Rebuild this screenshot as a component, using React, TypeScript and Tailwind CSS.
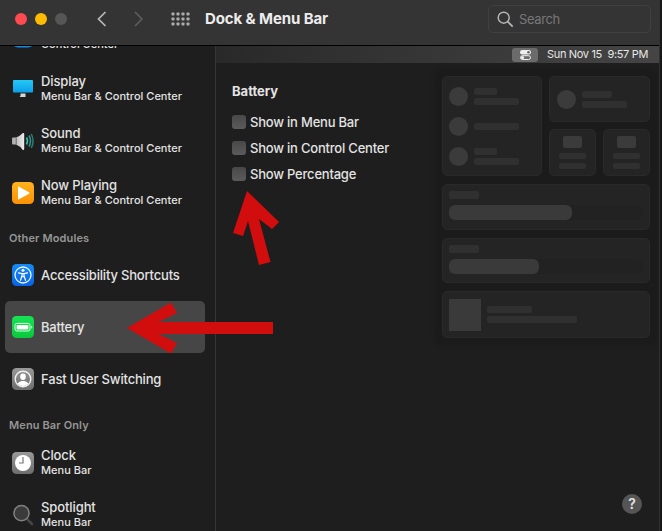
import type { ReactNode } from "react";

function Row({ icon, title, sub, active }: { icon: ReactNode; title?: ReactNode; sub?: ReactNode; active?: boolean }) {
  return (
    <div className={`ml-[5px] flex h-[52px] w-[200px] shrink-0 items-center rounded-[5px] pl-[6px] ${active ? "bg-[#464646]" : ""}`}>
      <div className="h-6 w-6 shrink-0">{icon}</div>
      <div className={`ml-[6px] whitespace-nowrap text-[#e3e3e3] ${sub ? "pb-[2px]" : ""}`}>
        <div className={`min-h-4 text-[13px] font-medium leading-4 ${sub ? "-mt-px tracking-[-0.1px]" : "tracking-[-0.18px]"}`}>{title}</div>
        {sub && <div className="text-[11px] font-medium leading-[14px] tracking-[0.02px]">{sub}</div>}
      </div>
    </div>
  );
}

function Gradients() {
  return (
    <svg width="0" height="0" className="absolute">
      <defs>
        <linearGradient id="cyan" x2="0" y2="1"><stop stopColor="#25c8f7" /><stop offset="1" stopColor="#0b9fe8" /></linearGradient>
        <linearGradient id="orange" x2="0" y2="1"><stop stopColor="#ffb31c" /><stop offset="1" stopColor="#fb9106" /></linearGradient>
        <linearGradient id="blue" x2="0" y2="1"><stop stopColor="#168bf4" /><stop offset="1" stopColor="#0863e6" /></linearGradient>
        <linearGradient id="green" x2="0" y2="1"><stop stopColor="#16e454" /><stop offset="1" stopColor="#0bc83d" /></linearGradient>
        <linearGradient id="gray" x2="0" y2="1"><stop stopColor="#999" /><stop offset="1" stopColor="#6d6d6d" /></linearGradient>
        <linearGradient id="silver" x2="1" y2="0"><stop stopColor="#a5a5a5" /><stop offset="1" stopColor="#ededed" /></linearGradient>
      </defs>
    </svg>
  );
}

function ControlIcon() {
  return (
    <svg width="24" height="24">
      <rect x="1" y="1" width="22" height="21.500" rx="6" fill="#1688e0" />
    </svg>
  );
}

function DisplayIcon() {
  return (
    <svg width="24" height="24">
      <rect x="2" y="3" width="20" height="12.500" rx="0.800" fill="url(#cyan)" />
      <path d="M9.500 16.500h5v3.500h-6l1-1z" fill="#d6d6d6" />
    </svg>
  );
}

function SoundIcon() {
  return (
    <svg width="24" height="24" fill="none">
      <path d="M1 9.500q0-1 1-1h3q4-1.300 6.500-4.200 1.700-.8 1.700 1v14.400q0 1.700-1.700 1Q9 17 5 15.500H2q-1 0-1-1z" fill="url(#silver)" />
      <path d="M5.200 8.500v7" stroke="#666" strokeWidth="1" />
      <path d="M15.500 8.500q2 3.500 0 7" stroke="#3fb8ae" strokeWidth="1.600" />
      <path d="M18 6.500q3 5.500 0 11" stroke="#2c948c" strokeWidth="1.600" />
      <path d="M20.300 5q3.500 7 0 14" stroke="#2d7d75" strokeWidth="1.500" />
    </svg>
  );
}

function PlayIcon() {
  return (
    <svg width="24" height="24">
      <rect x="1" y="1" width="22" height="22" rx="4.500" fill="url(#orange)" />
      <path d="M7 6.200v11.600q0 1 1 .5l10-5.500q1.200-.8 0-1.500L8 5.700q-1-.5-1 .5z" fill="#fff" />
    </svg>
  );
}

function AccessIcon() {
  return (
    <svg width="24" height="24" fill="none">
      <rect x="1" y="1" width="22" height="22" rx="4.500" fill="url(#blue)" />
      <circle cx="12" cy="12" r="8" stroke="#e8f2ff" strokeWidth="1.300" />
      <circle cx="12" cy="7.300" r="1.500" fill="#fff" />
      <path d="M7.500 9.800l3.500.8v2.200L9.500 17.300M16.500 9.800l-3.500.8v2.200l1.500 4.500M11 10.600h2v3h-2z" stroke="#fff" strokeWidth="1.200" strokeLinecap="round" strokeLinejoin="round" />
    </svg>
  );
}

function BatteryIcon() {
  return (
    <svg width="24" height="24" fill="none">
      <rect x="1" y="1" width="22" height="22" rx="4.500" fill="url(#green)" />
      <rect x="4" y="8.400" width="15" height="7.600" rx="2" stroke="#d9ffe3" />
      <rect x="5.600" y="10" width="11.800" height="4.400" rx="0.700" fill="#fff" />
      <path d="M20.200 10.800q1 0 1 1.400t-1 1.400z" fill="#d9ffe3" />
    </svg>
  );
}

function UserIcon() {
  return (
    <svg width="24" height="24" fill="none">
      <rect x="1" y="1" width="22" height="22" rx="4.500" fill="url(#gray)" />
      <circle cx="12" cy="12" r="7.800" stroke="#f1f1f1" strokeWidth="1.400" />
      <ellipse cx="12" cy="9.800" rx="2.800" ry="3.300" fill="#fff" />
      <path d="M6.500 16.500q1.500-2 4-2.500h3q2.500.5 4 2.500Q15 19 12 19t-5.500-2.500z" fill="#fff" />
    </svg>
  );
}

function ClockIcon() {
  return (
    <svg width="24" height="24" fill="none">
      <rect x="1" y="1" width="22" height="22" rx="4.500" fill="url(#gray)" />
      <circle cx="12" cy="12" r="8" fill="#fff" />
      <path d="M12 6v6H8" stroke="#777" strokeWidth="1.200" />
    </svg>
  );
}

function SpotlightIcon() {
  return (
    <svg width="24" height="24" fill="none">
      <path d="M16.500 16.500l4.500 4.500" stroke="#454545" strokeWidth="2.600" strokeLinecap="round" />
      <circle cx="10.500" cy="10.200" r="7.600" fill="#3b3b3b" stroke="#818181" strokeWidth="1.500" />
    </svg>
  );
}

function Check({ children }: { children: ReactNode }) {
  return (
    <div className="flex h-[26px] items-center whitespace-nowrap text-[13px] font-medium tracking-[-0.21px] text-[#e3e3e3]">
      <span className="mr-1 h-[14px] w-[14px] rounded-[3px] bg-linear-to-b from-[#484848] to-[#5b5b5b]" />
      <span className="pt-px">{children}</span>
    </div>
  );
}

const card = "rounded-[5px] border border-[#292929] bg-[#242424]";

function Lines({ a, b }: { a: string; b?: string }) {
  return (
    <div className="ml-[6px] flex flex-col gap-[3px]">
      <div className={`h-[7px] rounded-[2px] bg-[#303030] ${a}`} />
      {b && <div className={`h-[7px] rounded-[2px] bg-[#303030] ${b}`} />}
    </div>
  );
}

function Toggle({ a, b }: { a: string; b?: string }) {
  return (
    <div className="flex h-[30px] items-center">
      <div className="h-[19px] w-[19px] rounded-full bg-[#3b3b3b]" />
      <Lines a={a} b={b} />
    </div>
  );
}

function SmallCard() {
  return (
    <div className={`${card} flex h-[47px] flex-1 flex-col items-center pt-[6px]`}>
      <div className="h-[12px] w-[19px] rounded-[2px] bg-[#3b3b3b]" />
      <div className="mt-[5px] h-[6px] w-[27px] rounded-[2px] bg-[#303030]" />
      <div className="mt-[4px] h-[6px] w-[27px] rounded-[2px] bg-[#303030]" />
    </div>
  );
}

function SliderCard({ width, height }: { width: string; height: string }) {
  return (
    <div className={`${card} px-[6px] pt-[6px] ${height}`}>
      <div className="h-[8px] w-[30px] rounded-[2px] bg-[#303030]" />
      <div className="mt-[6px] h-[15px] rounded-full bg-[#222]">
        <div className={`h-full rounded-[6px] bg-[#3a3a3a] ${width}`} />
      </div>
    </div>
  );
}

function Preview() {
  return (
    <div className="absolute left-[220px] top-[25px] flex h-[273px] w-[220px] flex-col gap-[8px] rounded-[8px] bg-[#1b1b1b] px-[6px] pt-[5px] shadow-[0_0_5px_#1a1a1a]">
      <div className="flex gap-[7px]">
        <div className={`${card} h-[100px] w-[100px] px-[6px] pt-[4px]`}>
          <Toggle a="w-[23px]" b="w-[45px]" />
          <Toggle a="w-[45px]" />
          <Toggle a="w-[23px]" b="w-[45px]" />
        </div>
        <div className="flex flex-1 flex-col gap-[7px]">
          <div className={`${card} flex h-[46px] items-center px-[7px]`}>
            <div className="h-[19px] w-[19px] rounded-full bg-[#3b3b3b]" />
            <Lines a="w-[30px]" b="w-[45px]" />
          </div>
          <div className="flex gap-[7px]"><SmallCard /><SmallCard /></div>
        </div>
      </div>
      <SliderCard width="w-[123px]" height="h-[46px]" />
      <SliderCard width="w-[90px]" height="h-[45px]" />
      <div className={`${card} flex h-[47px] items-center px-[6px]`}>
        <div className="h-[32px] w-[32px] bg-[#3a3a3a]" />
        <Lines a="w-[45px]" b="w-[90px]" />
      </div>
    </div>
  );
}

export default function App() {
  return (
    <div className="relative flex h-[531px] w-[662px] flex-col overflow-hidden bg-[#1e1e1e] font-['Inter','Liberation_Sans',sans-serif] text-[#e3e3e3]">
      <Gradients />
      <header className="flex h-[46px] shrink-0 items-center border-b border-black bg-[#343434] pb-[7px] pl-[15px]">
        <div className="flex gap-2">
          <span className="h-3 w-3 rounded-full bg-[#ff4b50]" />
          <span className="h-3 w-3 rounded-full bg-[#fdbc02]" />
          <span className="h-3 w-3 rounded-full bg-[#565656]" />
        </div>
        <svg className="ml-[30px]" width="10" height="16" fill="none"><path d="M8.500 1L1.500 8l7 7" stroke="#b8b8b8" strokeWidth="1.700" /></svg>
        <svg className="ml-[27px]" width="10" height="16" fill="none"><path d="M1 1l7 7-7 7" stroke="#5f5f5f" strokeWidth="1.500" /></svg>
        <svg className="ml-[27px]" width="20" height="14" fill="#acacac">
          {[0, 5, 10].flatMap((y) => [0, 5, 10, 15].map((x) => <rect key={`${x}-${y}`} x={x + 0.5} y={y + 0.5} width="3" height="3" rx="0.700" />))}
        </svg>
        <h1 className="ml-[14px] whitespace-nowrap text-[15px] font-bold tracking-[-0.1px] text-[#ececec]">Dock &amp; Menu Bar</h1>
        <div className="ml-auto mr-[11px] flex h-[28px] w-[163px] items-center rounded-[5px] border border-[#404040] pl-[8px] text-[13px] tracking-[-0.4px] text-[#787878]">
          <svg className="mr-[5px]" width="17" height="17" fill="none"><circle cx="6.700" cy="6.700" r="5.500" stroke="#b4b4b4" strokeWidth="1.500" /><path d="M10.700 10.700l5 5" stroke="#b4b4b4" strokeWidth="1.700" /></svg>
          <span className="pt-px">Search</span>
        </div>
      </header>
      <div className="flex min-h-0 flex-1">
        <aside className="flex w-[216px] shrink-0 flex-col overflow-hidden border-r border-[#353535]">
          <div className="-mt-[35px]" />
          <Row icon={<ControlIcon />} sub="Control Center" />
          <Row icon={<DisplayIcon />} title="Display" sub="Menu Bar & Control Center" />
          <Row icon={<SoundIcon />} title="Sound" sub="Menu Bar & Control Center" />
          <Row icon={<PlayIcon />} title="Now Playing" sub="Menu Bar & Control Center" />
          <div className="flex h-[30px] shrink-0 items-center pl-[9px] pt-[8px] text-[11px] font-semibold tracking-[0.12px] text-[#969696]">Other Modules</div>
          <Row icon={<AccessIcon />} title="Accessibility Shortcuts" />
          <Row icon={<BatteryIcon />} title="Battery" active />
          <Row icon={<UserIcon />} title="Fast User Switching" />
          <div className="flex h-[32px] shrink-0 items-center pl-[9px] pt-[8px] text-[11px] font-semibold tracking-[0.12px] text-[#969696]">Menu Bar Only</div>
          <Row icon={<ClockIcon />} title="Clock" sub="Menu Bar" />
          <Row icon={<SpotlightIcon />} title="Spotlight" sub="Menu Bar" />
        </aside>
        <main className="relative flex-1">
          <div className="flex h-[17px] items-center bg-linear-to-r from-[#292929] to-[#454545] pr-[14px] text-[11px] tracking-[-0.34px] text-[#e7e7e7]">
            <div className="ml-auto mr-[9px] flex h-[14px] w-[26px] items-center justify-center rounded-[3px] bg-[#6b6b6b]">
              <svg width="11" height="10" fill="none"><rect width="11" height="4.400" rx="2.200" fill="#eee" /><circle cx="8.500" cy="2.200" r="1.300" fill="#666" /><rect x="0.500" y="5.700" width="10" height="3.800" rx="1.900" stroke="#eee" /><circle cx="2.500" cy="7.600" r="1.600" fill="#eee" /></svg>
            </div>
            <span className="whitespace-pre">Sun Nov 15  9:57 PM</span>
          </div>
          <section className="pl-4 pt-[19px]">
            <h2 className="mb-[9px] text-[13px] font-bold leading-[18px]">Battery</h2>
            <Check>Show in Menu Bar</Check>
            <Check>Show in Control Center</Check>
            <Check>Show Percentage</Check>
          </section>
          <Preview />
        </main>
      </div>
      <button className="absolute left-[622px] top-[494px] h-5 w-5 rounded-full bg-[#555] text-[14px] font-semibold leading-5">?</button>
      <div className="absolute bottom-0 right-0 top-0 w-[3px] border-l border-[#303030] bg-[#171717]" />
      <svg className="pointer-events-none absolute left-0 top-0" width="662" height="531" fill="#d10d0e">
        <path d="M127 328L171 302.500 177 313 158.500 322H273V334H158.500L177 343 171 353.500z" />
        <path d="M247 191L279 222 272 229 259 219 270.500 262 259 265 248 221 243 236 233 233z" />
      </svg>
    </div>
  );
}
